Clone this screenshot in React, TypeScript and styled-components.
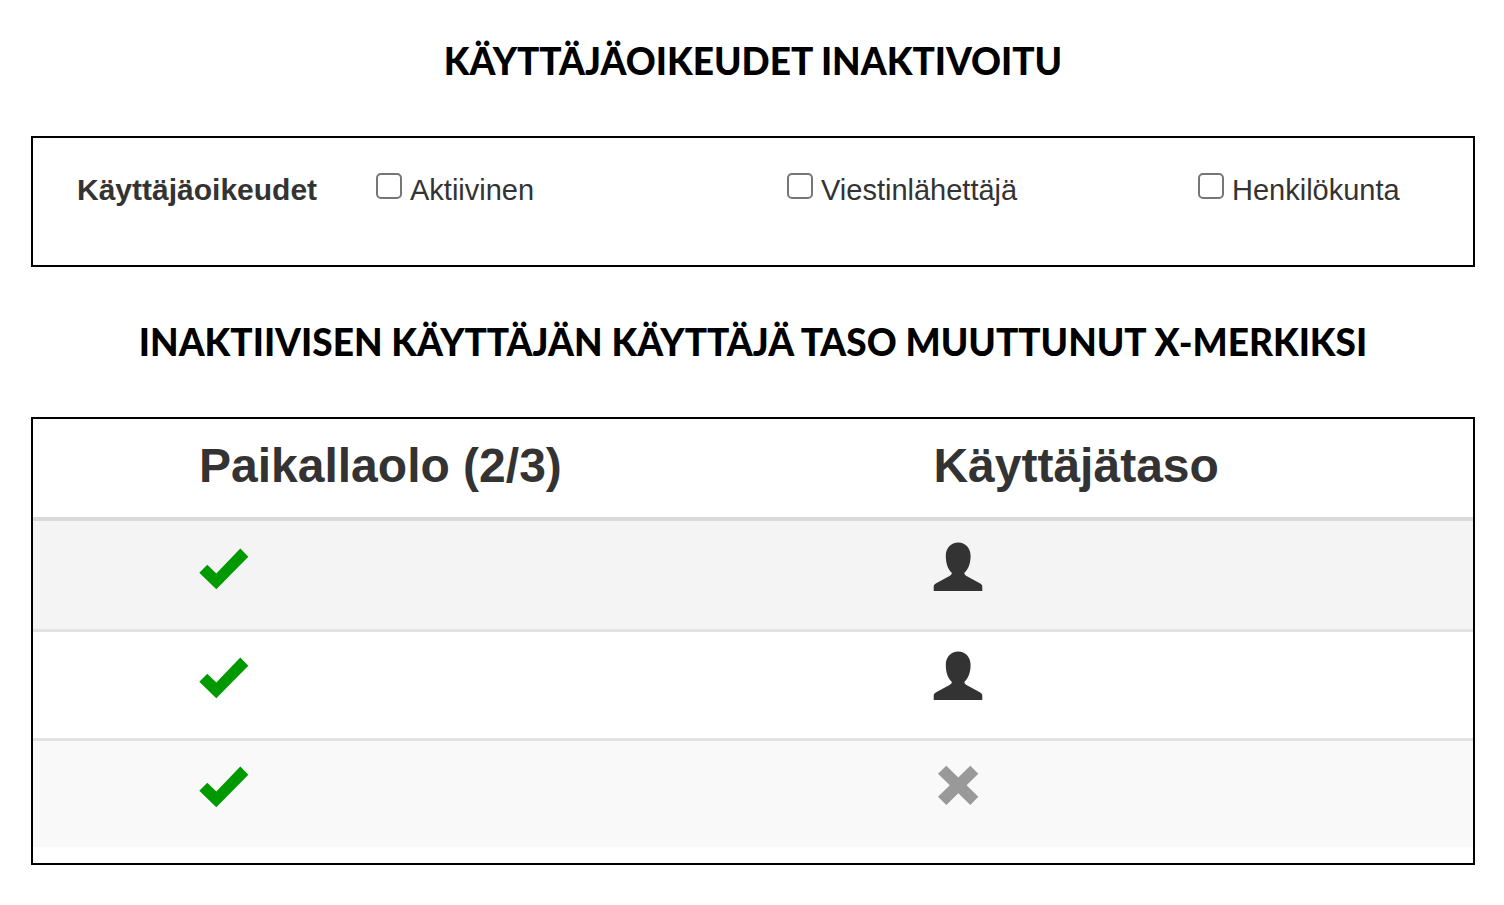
import React, { useState } from "react";
import styled, { createGlobalStyle } from "styled-components";

const GlobalStyle = createGlobalStyle`
  *, *::before, *::after { box-sizing: border-box; }
  body {
    margin: 0;
    background: #fff;
    color: #333;
    font-family: "Liberation Sans", Arial, sans-serif;
  }
`;

const Page = styled.main`
  padding: 38px 29px 40px 31px;
`;

const Heading = styled.h1`
  margin: 0 0 52px;
  color: #000;
  font-family: Lato, "Open Sans", sans-serif;
  font-size: 37px;
  font-weight: 900;
  line-height: 46px;
  text-align: center;
`;

const Panel = styled.section`
  border: 2px solid #000;
  background: #fff;

  & + ${Heading} {
    margin-top: 52px;
  }
`;

const RightsRow = styled.div`
  display: grid;
  grid-template-columns: 299px 1fr 1fr 275px;
  align-items: start;
  padding: 34px 0 57px 44px;
  line-height: 36px;
`;

const RightsTitle = styled.span`
  font-size: 30px;
  font-weight: 700;
`;

const Option = styled.label`
  display: flex;
  align-items: flex-start;
  gap: 8px;
  font-size: 29px;
  white-space: nowrap;
`;

const Checkbox = styled.input`
  appearance: none;
  flex: none;
  width: 26px;
  height: 26px;
  margin: 1px 0 0;
  border: 2px solid #767676;
  border-radius: 5px;
  background: #fff;

  &:checked {
    background: #0075ff;
    border-color: #0075ff;
  }
`;

const Table = styled.table`
  width: 100%;
  margin-bottom: 16px;
  border-collapse: separate;
  border-spacing: 0;
  table-layout: fixed;
`;

const HeaderCell = styled.th<{ $width: string }>`
  width: ${(p) => p.$width};
  height: 102px;
  padding: 0 0 4px 166px;
  border-bottom: 4px solid #d9d9d9;
  font-size: 48px;
  font-weight: 700;
  line-height: 56px;
  text-align: left;
`;

const Row = styled.tr<{ $tone: string }>`
  background: ${(p) => p.$tone};
`;

const Cell = styled.td`
  height: 109px;
  padding: 19px 0 0 165px;
  border-top: 3px solid #e2e2e2;
  vertical-align: top;

  ${Row}:first-child & {
    height: 108px;
    padding-top: 21px;
    border-top: 0;
  }
`;

const Icon = styled.svg`
  display: block;
  width: 51px;
  height: 50px;
`;

const CheckIcon = () => (
  <Icon viewBox="-1 0 51 50" role="img" aria-label="Paikalla">
    <path fill="#090" d="M.3 30.7 8.3 22.7 17.3 31.5 41.3 6.6 49.3 14.7 17.3 47.3Z" />
  </Icon>
);

const UserIcon = () => (
  <Icon viewBox="-1 0 51 50" role="img" aria-label="Käyttäjä">
    <path
      fill="#333"
      d="M25.2.5C18 .5 12.8 6 12.8 14C12.8 21.5 15 27.5 18.8 30.8C18.8 32.4 18 33.2 16.5 34L3.2 41.2C1.4 42.2.7 43.2.7 45V49H49.3V45C49.3 43.2 48.6 42.2 46.8 41.2L33.5 34C32 33.2 31.4 32.4 31.4 30.8C35.2 27.5 37.6 21.5 37.6 14C37.6 6 32.4.5 25.2.5Z"
    />
  </Icon>
);

const CrossIcon = () => (
  <Icon viewBox="-1 0 51 50" role="img" aria-label="Inaktiivinen">
    <path
      fill="#999"
      d="M13.3 5.7 25.3 17.5 37.3 5.7 45.3 13.8 33.6 25.3 45.3 36.8 37.3 45 25.3 33.3 13.3 45 5 36.8 16.8 25.3 5 13.8Z"
    />
  </Icon>
);

const options = ["Aktiivinen", "Viestinlähettäjä", "Henkilökunta"];

const rows = [
  { id: 1, tone: "#f4f4f4", active: true },
  { id: 2, tone: "#fff", active: true },
  { id: 3, tone: "#f9f9f9", active: false },
];

export default function App() {
  const [checked, setChecked] = useState<Record<string, boolean>>({});

  return (
    <>
      <GlobalStyle />
      <Page>
        <Heading>KÄYTTÄJÄOIKEUDET INAKTIVOITU</Heading>
        <Panel>
          <RightsRow role="group" aria-labelledby="rights-title">
            <RightsTitle id="rights-title">Käyttäjäoikeudet</RightsTitle>
            {options.map((name) => (
              <Option key={name}>
                <Checkbox
                  type="checkbox"
                  checked={!!checked[name]}
                  onChange={(e) => setChecked({ ...checked, [name]: e.target.checked })}
                />
                {name}
              </Option>
            ))}
          </RightsRow>
        </Panel>
        <Heading as="h2">INAKTIIVISEN KÄYTTÄJÄN KÄYTTÄJÄ TASO MUUTTUNUT X-MERKIKSI</Heading>
        <Panel>
          <Table>
            <thead>
              <tr>
                <HeaderCell scope="col" $width="51%">Paikallaolo (2/3)</HeaderCell>
                <HeaderCell scope="col" $width="49%">Käyttäjätaso</HeaderCell>
              </tr>
            </thead>
            <tbody>
              {rows.map((row) => (
                <Row key={row.id} $tone={row.tone}>
                  <Cell><CheckIcon /></Cell>
                  <Cell>{row.active ? <UserIcon /> : <CrossIcon />}</Cell>
                </Row>
              ))}
            </tbody>
          </Table>
        </Panel>
      </Page>
    </>
  );
}
